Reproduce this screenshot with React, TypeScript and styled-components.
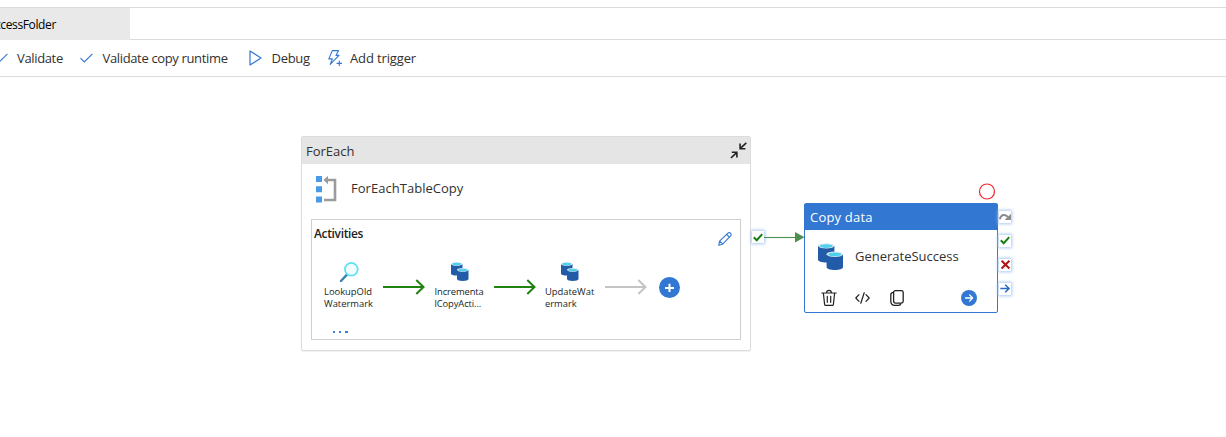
import React from 'react';
import styled, { createGlobalStyle } from 'styled-components';

const Global = createGlobalStyle`
  * { box-sizing: border-box; }
  body { margin: 0; background: #fff; font-family: "Open Sans", "Noto Sans", sans-serif; color: #323130; }
  svg { display: block; flex: none; overflow: visible; }
`;

const Page = styled.div`
  width: 1226px;
  height: 437px;
  display: flex;
  flex-direction: column;
  overflow: hidden;
  background: #fff;
`;

const TabBar = styled.div`
  margin-top: 7px;
  height: 33px;
  border-top: 1px solid #dcdcdc;
  border-bottom: 1px solid #dcdcdc;
  display: flex;
  flex: none;
`;

const Tab = styled.div`
  width: 130px;
  height: 32px;
  background: #e9e9e9;
  color: #000;
  display: flex;
  align-items: center;
  padding-top: 1px;
  overflow: hidden;
  span { margin-left: -5px; }
`;

const Toolbar = styled.div`
  height: 37px;
  flex: none;
  border-bottom: 1px solid #dcdcdc;
  display: flex;
  align-items: center;
  overflow: hidden;
`;

const Command = styled.div<{ $w: number; $gap: number }>`
  width: ${p => p.$w}px;
  flex: none;
  display: flex;
  align-items: center;
  gap: ${p => p.$gap}px;
`;

const ClippedIcon = styled.div`
  margin-left: -5px;
`;

const Label = styled.span<{ $size?: number; $track?: number; $weight?: number }>`
  font-size: ${p => p.$size ?? 13}px;
  letter-spacing: ${p => p.$track ?? 0}px;
  font-weight: ${p => p.$weight ?? 400};
  line-height: 18px;
  white-space: nowrap;
`;

const Canvas = styled.div`
  position: relative;
  flex: 1;
`;

const Placed = styled.div<{ $x: number; $y: number }>`
  position: absolute;
  left: ${p => p.$x}px;
  top: ${p => p.$y}px;
`;

const LoopNode = styled.div`
  width: 450px;
  height: 215px;
  border: 1px solid #dcdcdc;
  border-radius: 2px;
  background: #fff;
  box-shadow: 0 1px 1px rgba(0, 0, 0, 0.06);
`;

const LoopHeader = styled.div`
  height: 27px;
  background: #e5e5e5;
  display: flex;
  align-items: center;
  justify-content: space-between;
  padding: 0 3px 0 4px;
`;

const LoopTitle = styled.div`
  height: 55px;
  display: flex;
  align-items: center;
  gap: 14px;
  padding: 0 0 4px 13px;
  span { margin-bottom: 4px; }
`;

const Activities = styled.div`
  width: 430px;
  height: 121px;
  margin-left: 9px;
  border: 1px solid #cfcfcf;
  padding-left: 2px;
  color: #201f1e;
`;

const ActivitiesHead = styled.div`
  display: flex;
  justify-content: space-between;
  height: 41px;
  padding: 5px 8px 0 0;
  svg { margin-top: 7px; }
`;

const Flow = styled.div`
  display: flex;
  align-items: flex-start;
`;

const Activity = styled.div<{ $w: number }>`
  width: ${p => p.$w}px;
  padding-left: 10px;
  flex: none;
`;

const ActivityIcon = styled.div`
  height: 25px;
  padding: 1px 0 0 16px;
`;

const ActivityName = styled.div<{ $track?: number }>`
  font-size: 9.4px;
  line-height: 11.5px;
  letter-spacing: ${p => p.$track ?? 0}px;
  white-space: pre;
`;

const ArrowSlot = styled.div<{ $w: number }>`
  width: ${p => p.$w}px;
  padding-top: 18px;
  flex: none;
`;

const AddButton = styled.div`
  margin-top: 16px;
`;

const More = styled.div`
  display: flex;
  gap: 4px;
  margin: 22px 0 0 19px;
  i { width: 2.2px; height: 2.2px; background: #3277d2; border-radius: 0.5px; }
`;

const CopyNode = styled.div`
  width: 194px;
  height: 110px;
  border: 1px solid #3277d2;
  border-radius: 2px;
  background: #fff;
`;

const CopyHeader = styled.div`
  height: 26px;
  background: #3277d2;
  color: #fff;
  display: flex;
  align-items: center;
  padding: 0 0 0 5px;
`;

const CopyBody = styled.div`
  height: 55px;
  display: flex;
  align-items: center;
  gap: 12px;
  padding: 0 0 2px 13px;
  span { margin-bottom: 2px; }
`;

const CopyActions = styled.div`
  display: flex;
  align-items: center;
  padding: 5px 0 0 16px;
`;

const ActionSlot = styled.div<{ $w: number }>`
  width: ${p => p.$w}px;
  flex: none;
`;

const Ports = styled.div`
  display: flex;
  flex-direction: column;
  gap: 12px;
`;

const Port = styled.div`
  width: 12px;
  height: 12px;
  background: #fff;
  box-shadow: 0 0 3px 1px #a9c8f2;
  display: flex;
  align-items: center;
  justify-content: center;
`;

const Check = () => (
  <svg width="13" height="10" viewBox="0 0 13 10" fill="none" stroke="#3277d2" strokeWidth="1.1">
    <path d="M.5 5.2 4.3 9 12.4.8" />
  </svg>
);

const Database = ({ size }: { size: number }) => (
  <svg width={size} height={size * 1.09} viewBox="0 0 25 27.2">
    <path d="M0 2.7V16.7C0 18.2 3.6 19.4 8.2 19.4s8.2-1.2 8.2-2.7v-14z" fill="#225ba8" />
    <ellipse cx="8.2" cy="2.8" rx="8.2" ry="2.7" fill="#dfe9ef" />
    <ellipse cx="8.2" cy="3" rx="6.5" ry="1.9" fill="#4fd0ec" />
    <path d="M8.6 11.3V24.3c0 1.6 3.6 2.8 8.2 2.8s8.2-1.2 8.2-2.8v-13z" fill="#225ba8" />
    <ellipse cx="16.8" cy="11.2" rx="8.2" ry="2.7" fill="#dfe9ef" />
    <ellipse cx="16.8" cy="11.4" rx="6.5" ry="1.9" fill="#4fd0ec" />
  </svg>
);

const LongArrow = ({ color }: { color: string }) => (
  <svg width="42" height="15" viewBox="0 0 42 15" fill="none" stroke={color} strokeWidth="2">
    <path d="M0 8h40.5M33.3 1l7.2 7-7.2 7" />
  </svg>
);

const PortCheck = () => (
  <svg width="10" height="9" viewBox="0 0 10 9" fill="none" stroke="#15800f" strokeWidth="2">
    <path d="M.8 4.2 3.7 7.2 9.2 1.1" />
  </svg>
);

export default function App() {
  return (
    <Page>
      <Global />
      <TabBar>
        <Tab><Label $size={12} $track={-0.38}>ccessFolder</Label></Tab>
      </TabBar>
      <Toolbar>
        <Command $w={80} $gap={9}>
          <ClippedIcon><Check /></ClippedIcon>
          <Label $track={-0.35}>Validate</Label>
        </Command>
        <Command $w={169} $gap={9.5}>
          <Check />
          <Label $track={-0.35}>Validate copy runtime</Label>
        </Command>
        <Command $w={79} $gap={9.5}>
          <svg width="13" height="16" viewBox="0 0 13 16" fill="none" stroke="#3277d2" strokeWidth="1.2" strokeLinejoin="round">
            <path d="M1 1v14l11-7z" />
          </svg>
          <Label $track={-0.3}>Debug</Label>
        </Command>
        <Command $w={110} $gap={8}>
          <svg width="14" height="16" viewBox="0 0 14 16" fill="none" stroke="#3277d2" strokeWidth="1.1" strokeLinejoin="round">
            <path d="M4.3.6h6.2L8 5.4h3L2.2 14.4 4.4 8.9H.8zM11.3 10.7v5.3M8.6 13.4h5.4" />
          </svg>
          <Label $track={-0.13}>Add trigger</Label>
        </Command>
      </Toolbar>
      <Canvas>
        <Placed $x={301} $y={59}>
          <LoopNode>
            <LoopHeader>
              <Label $track={0}>ForEach</Label>
              <svg width="17" height="17" viewBox="0 0 17 17" fill="none" stroke="#222" strokeWidth="1.6">
                <path d="M16.3.8 10.6 6.2M10.1 1.5v5.2h5.3M.9 16 6.4 10.8M1.8 10.3h5.1v5.2" />
              </svg>
            </LoopHeader>
            <LoopTitle>
              <svg width="22" height="27" viewBox="0 0 22 27">
                <path d="M1 0h6v6H1zM1 10.2h6v6H1zM1 20.4h6v6H1z" fill="#4b9ae6" />
                <path d="M12 4h8v20H9" fill="none" stroke="#9b9b9b" strokeWidth="2.6" />
                <path d="M8.4 4 13-.3V8.3z" fill="#9b9b9b" />
              </svg>
              <Label $track={0.03}>ForEachTableCopy</Label>
            </LoopTitle>
            <Activities>
              <ActivitiesHead>
                <Label $size={12} $track={-0.35} $weight={600}>Activities</Label>
                <svg width="14" height="14" viewBox="0 0 14 14" fill="none" stroke="#3277d2" strokeWidth="1.1" strokeLinejoin="round">
                  <path d="M.7 13.3 1.6 9.2 9.9 1.2a1.7 1.7 0 0 1 2.6 0 1.8 1.8 0 0 1 .2 2.6L4.6 12.2zM8.8 2.5l2.8 2.9M1.8 9.1l3 3" />
                </svg>
              </ActivitiesHead>
              <Flow>
                <Activity $w={69}>
                  <ActivityIcon>
                    <svg width="19" height="20" viewBox="0 0 19 20" fill="none">
                      <path d="M.9 19 7 12.6" stroke="#3781b0" strokeWidth="2.3" strokeLinecap="round" />
                      <circle cx="11.3" cy="7.3" r="6.4" fill="#f1fcff" stroke="#5fe0f5" strokeWidth="1.7" />
                    </svg>
                  </ActivityIcon>
                  <ActivityName>{'LookupOld\nWatermark'}</ActivityName>
                </Activity>
                <ArrowSlot $w={41.5}><LongArrow color="#218210" /></ArrowSlot>
                <Activity $w={69.5}>
                  <ActivityIcon><Database size={17.5} /></ActivityIcon>
                  <ActivityName $track={-0.1}>{'Incrementa\nlCopyActi...'}</ActivityName>
                </Activity>
                <ArrowSlot $w={41}><LongArrow color="#218210" /></ArrowSlot>
                <Activity $w={70}>
                  <ActivityIcon><Database size={17.5} /></ActivityIcon>
                  <ActivityName>{'UpdateWat\nermark'}</ActivityName>
                </Activity>
                <ArrowSlot $w={54}><LongArrow color="#c4c4c4" /></ArrowSlot>
                <AddButton>
                  <svg width="21" height="21" viewBox="0 0 21 21">
                    <circle cx="10.5" cy="10.5" r="10.5" fill="#3277d2" />
                    <path d="M6 10.9h9M10.5 6.8v8.2" stroke="#fff" strokeWidth="2" />
                  </svg>
                </AddButton>
              </Flow>
              <More><i /><i /><i /></More>
            </Activities>
          </LoopNode>
        </Placed>

        <Placed $x={752} $y={154}>
          <Port><PortCheck /></Port>
        </Placed>
        <Placed $x={764} $y={155}>
          <svg width="40" height="11" viewBox="0 0 40 11">
            <path d="M0 5.5h32" stroke="#4c8f4e" strokeWidth="1.1" />
            <path d="M31 0 40.5 5.3 31 10.6z" fill="#4c8f4e" />
          </svg>
        </Placed>

        <Placed $x={804} $y={126}>
          <CopyNode>
            <CopyHeader><Label $track={0.2}>Copy data</Label></CopyHeader>
            <CopyBody>
              <Database size={25} />
              <Label $track={0}>GenerateSuccess</Label>
            </CopyBody>
            <CopyActions>
              <ActionSlot $w={34}>
                <svg width="16" height="16" viewBox="0 0 16 16" fill="none" stroke="#222" strokeWidth="1.2" strokeLinecap="round" strokeLinejoin="round">
                  <path d="M.8 3h14.4M5.6 2.8a2.4 2.4 0 0 1 4.8 0M2.4 3.2l1.2 11.2c.1.6.5 1 1 1h6.8c.5 0 .9-.4 1-1l1.2-11.2M6.3 6.3v6M9.7 6.3v6" />
                </svg>
              </ActionSlot>
              <ActionSlot $w={35}>
                <svg width="15" height="12" viewBox="0 0 15 12" fill="none" stroke="#222" strokeWidth="1.2" strokeLinecap="round" strokeLinejoin="round">
                  <path d="M4 2.6.8 6 4 9.4M11 2.6 14.2 6 11 9.4M9.2.7 5.8 11.3" />
                </svg>
              </ActionSlot>
              <ActionSlot $w={71}>
                <svg width="14" height="16" viewBox="0 0 14 16" fill="none" stroke="#222" strokeWidth="1.3" strokeLinejoin="round">
                  <rect x="3.6" y=".7" width="9.6" height="12.4" rx="1.8" />
                  <path d="M3.4 2.4C1.5 2.6.8 3.4.8 4.8v6.4c0 2.8 1.4 4.1 4 4.1h3.8c1.2 0 2-.6 2.4-1.8" />
                </svg>
              </ActionSlot>
              <svg width="16" height="16" viewBox="0 0 16 16" fill="none" stroke="#fff" strokeWidth="1.3" strokeLinecap="round" strokeLinejoin="round">
                <circle cx="8" cy="8" r="8" fill="#3277d2" stroke="none" />
                <path d="M4.5 8h7M8.6 4.9 11.6 8 8.6 11.1" />
              </svg>
            </CopyActions>
          </CopyNode>
        </Placed>

        <Placed $x={979} $y={106}>
          <svg width="16" height="17" viewBox="0 0 16 17">
            <circle cx="8" cy="8.5" r="7.5" fill="#fff" stroke="#f0262b" strokeWidth="1.2" />
          </svg>
        </Placed>

        <Placed $x={999} $y={133.5}>
          <Ports>
            <Port>
              <svg width="12" height="8" viewBox="0 0 12 8">
                <path d="M.8 6.2C2 1.6 6.2.4 9 4.2" fill="none" stroke="#8c8c8c" strokeWidth="2" />
                <path d="M12 .8V7H5.6z" fill="#8c8c8c" />
              </svg>
            </Port>
            <Port><PortCheck /></Port>
            <Port>
              <svg width="9" height="9" viewBox="0 0 9 9" stroke="#b01217" strokeWidth="2">
                <path d="M.6.7l7.8 7.8M8.4.7.6 8.5" />
              </svg>
            </Port>
            <Port>
              <svg width="10" height="9" viewBox="0 0 10 9" fill="none" stroke="#2b6cc6" strokeWidth="1.6">
                <path d="M.3 4.5h8.5M5.2.7 9 4.5 5.2 8.3" />
              </svg>
            </Port>
          </Ports>
        </Placed>
      </Canvas>
    </Page>
  );
}
